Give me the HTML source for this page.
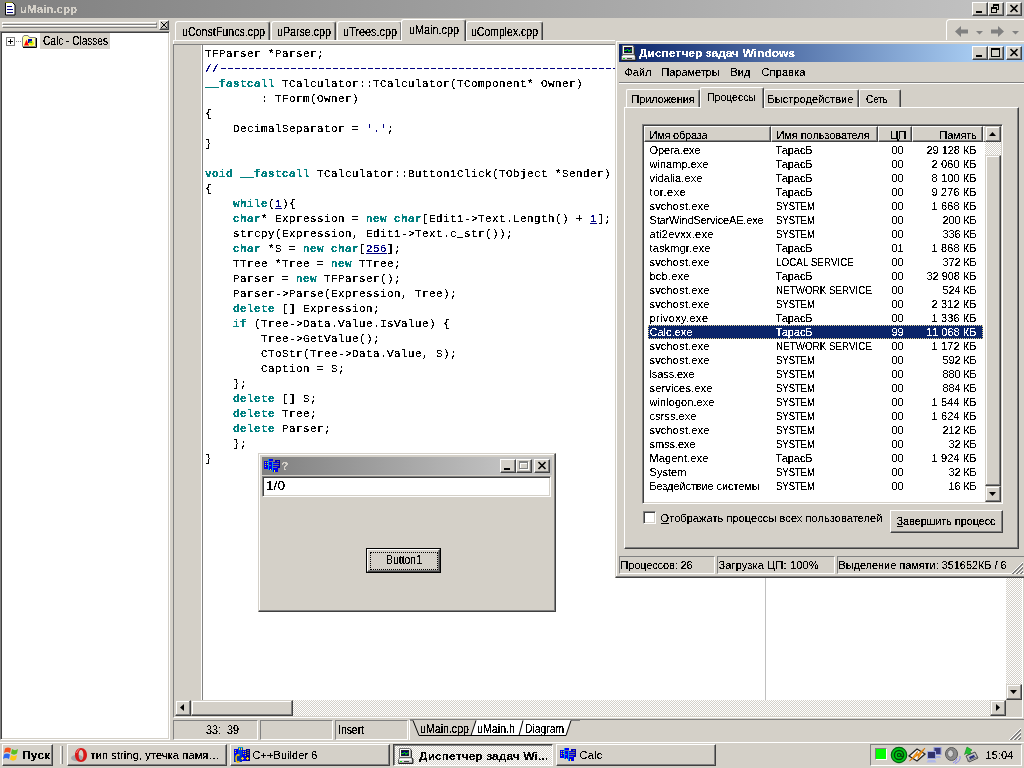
<!DOCTYPE html>
<html><head><meta charset="utf-8"><title>uMain.cpp</title>
<style>
*{box-sizing:border-box;margin:0;padding:0}
html,body{width:1024px;height:768px;overflow:hidden;background:#d4d0c8}
body{position:relative;font-family:"Liberation Sans","DejaVu Sans",sans-serif;font-size:11px;color:#000;line-height:13px}
.a{position:absolute}
.t{position:absolute;white-space:pre;line-height:13px}
.t u{text-decoration:underline}
.t{filter:url(#ths)}
#code{filter:url(#thr)}
.t.m{filter:url(#thm)}
.t.b{filter:url(#ths)}
.btn{background:#d4d0c8;border:1px solid;border-color:#fff #404040 #404040 #fff;box-shadow:inset -1px -1px 0 #808080}
.btn2{background:#d4d0c8;border:1px solid;border-color:#d4d0c8 #404040 #404040 #d4d0c8;box-shadow:inset -1px -1px 0 #808080,inset 1px 1px 0 #fff}
.sunk{border:1px solid;border-color:#808080 #fff #fff #808080}
.sunk2{border:1px solid;border-color:#808080 #fff #fff #808080;box-shadow:inset 1px 1px 0 #404040,inset -1px -1px 0 #d4d0c8}
.chk{background-image:conic-gradient(#fff 25%,#d4d0c8 0 50%,#fff 0 75%,#d4d0c8 0);background-size:2px 2px}
.win{background:#d4d0c8;border:1px solid;border-color:#d4d0c8 #404040 #404040 #d4d0c8;box-shadow:inset -1px -1px 0 #808080,inset 1px 1px 0 #fff}
#code{left:205px;top:47px;font-family:"Liberation Mono","DejaVu Sans Mono",monospace;font-size:11px;line-height:15px;letter-spacing:0.4px;white-space:pre;color:#000}
#code b{color:#008080}
#code i{color:#000080;font-style:normal}
#code u{color:#000080;text-decoration:underline}
#code i.d{position:relative;top:-1px;text-shadow:1px 0 0 #000080,2px 0 0 #000080}
svg{position:absolute;overflow:visible}
</style></head>
<body>
<svg width="0" height="0" style="left:0;top:0"><filter id="thr" x="0" y="0" width="100%" height="100%" color-interpolation-filters="sRGB"><feComponentTransfer><feFuncA type="discrete" tableValues="0 1 1"/></feComponentTransfer></filter><filter id="ths" x="0" y="0" width="100%" height="100%" color-interpolation-filters="sRGB"><feComponentTransfer><feFuncA type="discrete" tableValues="0 0 0 0 0 1 1 1 1 1 1 1"/></feComponentTransfer></filter><filter id="thb" x="0" y="0" width="100%" height="100%" color-interpolation-filters="sRGB"><feComponentTransfer><feFuncA type="discrete" tableValues="0 0 0 0 0 0 1 1 1 1 1"/></feComponentTransfer></filter><filter id="thm" x="0" y="0" width="100%" height="100%" color-interpolation-filters="sRGB"><feComponentTransfer><feFuncA type="discrete" tableValues="0 0 0 1 1 1 1 1"/></feComponentTransfer></filter></svg>
<div class="a" style="left:0px;top:0px;width:1024px;height:18px;background:linear-gradient(90deg,#808080 0,#c0c0c0 972px)"></div>
<svg style="left:5px;top:2px" width="11" height="14" viewBox="0 0 11 14"><path d="M0.5 0.5h7l2.5 2.5v10h-9.5z" fill="#fff" stroke="#000"/><path d="M0 0.5h7" stroke="#808000"/><path d="M2 4.5h5M2 7.5h6M2 10.5h6" stroke="#000080" stroke-width="1"/></svg>
<div class="t b" style="left:19.5px;top:3px;font-weight:bold;color:#d4d0c8;"><span style="display:inline-block;transform:scaleX(1.048);transform-origin:0 0">uMain.cpp</span></div>
<div class="a btn" style="left:972px;top:2px;width:16px;height:14px;"></div>
<div class="a" style="left:976px;top:11px;width:6px;height:2px;background:#000"></div>
<div class="a btn" style="left:988px;top:2px;width:16px;height:14px;"></div>
<div class="a" style="left:993px;top:4px;width:6px;height:6px;border:1px solid #000;border-top-width:2px"></div>
<div class="a" style="left:991px;top:7px;width:6px;height:6px;border:1px solid #000;border-top-width:2px;background:#d4d0c8"></div>
<div class="a btn" style="left:1006px;top:2px;width:16px;height:14px;"></div>
<svg style="left:1010px;top:5px" width="8" height="7" viewBox="0 0 8 7"><path d="M0.5 0L7.5 7M7.5 0L0.5 7" stroke="#000" stroke-width="1.6" fill="none"/></svg>
<div class="a" style="left:2px;top:22px;width:155px;height:3px;border-top:1px solid #fff;border-left:1px solid #fff;border-bottom:1px solid #808080;border-right:1px solid #808080"></div>
<div class="a" style="left:2px;top:25px;width:155px;height:3px;border-top:1px solid #fff;border-left:1px solid #fff;border-bottom:1px solid #808080;border-right:1px solid #808080"></div>
<div class="a" style="left:159px;top:20px;width:10px;height:10px;border:1px solid;border-color:#fff #404040 #404040 #fff;box-shadow:inset -1px -1px 0 #808080"></div>
<svg style="left:161px;top:22px" width="6" height="6" viewBox="0 0 6 6" shape-rendering="crispEdges"><path d="M0 0h1v1h-1zM5 0h1v1h-1zM1 1h1v1h-1zM4 1h1v1h-1zM2 2h1v1h-1zM3 2h1v1h-1zM3 3h1v1h-1zM2 3h1v1h-1zM4 4h1v1h-1zM1 4h1v1h-1zM5 5h1v1h-1zM0 5h1v1h-1z" fill="#000"/></svg>
<div class="a" style="left:0px;top:31px;width:170px;height:709px;background:#fff;border:1px solid;border-color:#808080 #fff #fff #808080;box-shadow:inset 1px 1px 0 #404040,inset -1px -1px 0 #d4d0c8"></div>
<div class="a" style="left:6px;top:37px;width:9px;height:9px;border:1px solid #808080;background:#fff"></div>
<div class="a" style="left:8px;top:41px;width:5px;height:1px;background:#000"></div>
<div class="a" style="left:10px;top:39px;width:1px;height:5px;background:#000"></div>
<div class="a" style="left:16px;top:41px;width:5px;height:1px;background:repeating-linear-gradient(90deg,#808080 0 1px,transparent 1px 2px)"></div>
<svg style="left:22px;top:35px" width="16" height="13" viewBox="0 0 16 13"><path d="M0.500 2.500L2 0.500H6L7.500 2.500H13.500V11.500H0.500z" fill="#ffffa8" stroke="#808080"/><path d="M1 12.500H14.500V3" stroke="#000" fill="none"/><path d="M2 10.500L4.500 4.500L7 10.500z" fill="#ff0000"/><rect x="6" y="4" width="4" height="4" fill="#0000c0"/><circle cx="9.500" cy="8.300" r="2.400" fill="#e8e800"/><path d="M7.500 6.500h2.500v1.500q-1.500-.5-2.500 0z" fill="#00b040"/></svg>
<div class="a" style="left:40px;top:33px;width:70px;height:16px;background:#d4d0c8"></div>
<div class="t m" style="left:42.5px;top:35px;"><span style="display:inline-block;transform:scale(0.917,1.12);transform-origin:0 10px">Calc - Classes</span></div>
<div class="a" style="left:175px;top:21px;width:95px;height:20px;background:#d4d0c8;border-top:1px solid #fff;border-left:1px solid #fff;border-right:1px solid #404040;border-radius:3px 3px 0 0;box-shadow:inset -1px 0 0 #808080"></div>
<div class="t m" style="left:181.5px;top:26px;"><span style="display:inline-block;transform:scale(0.970,1.12);transform-origin:0 10px">uConstFuncs.cpp</span></div>
<div class="a" style="left:271px;top:21px;width:65px;height:20px;background:#d4d0c8;border-top:1px solid #fff;border-left:1px solid #fff;border-right:1px solid #404040;border-radius:3px 3px 0 0;box-shadow:inset -1px 0 0 #808080"></div>
<div class="t m" style="left:276.5px;top:26px;"><span style="display:inline-block;transform:scale(0.970,1.12);transform-origin:0 10px">uParse.cpp</span></div>
<div class="a" style="left:337px;top:21px;width:65px;height:20px;background:#d4d0c8;border-top:1px solid #fff;border-left:1px solid #fff;border-right:1px solid #404040;border-radius:3px 3px 0 0;box-shadow:inset -1px 0 0 #808080"></div>
<div class="t m" style="left:342.5px;top:26px;"><span style="display:inline-block;transform:scale(0.989,1.12);transform-origin:0 10px">uTrees.cpp</span></div>
<div class="a" style="left:466px;top:21px;width:77px;height:20px;background:#d4d0c8;border-top:1px solid #fff;border-left:1px solid #fff;border-right:1px solid #404040;border-radius:3px 3px 0 0;box-shadow:inset -1px 0 0 #808080"></div>
<div class="t m" style="left:470.5px;top:26px;"><span style="display:inline-block;transform:scale(0.953,1.12);transform-origin:0 10px">uComplex.cpp</span></div>
<div class="a" style="left:173px;top:40px;width:851px;height:1px;background:#fff"></div>
<div class="a" style="left:401px;top:19px;width:65px;height:22px;background:#d4d0c8;border-top:1px solid #fff;border-left:1px solid #fff;border-right:1px solid #404040;border-radius:3px 3px 0 0;box-shadow:inset -1px 0 0 #808080"></div>
<div class="t m" style="left:408.5px;top:24px;"><span style="display:inline-block;transform:scale(0.985,1.12);transform-origin:0 10px">uMain.cpp</span></div>
<div class="a" style="left:946px;top:19px;width:80px;height:22px;border-top:1px solid #fff;border-left:1px solid #fff;border-radius:4px 0 0 0"></div>
<svg style="left:955px;top:26px" width="66" height="12" viewBox="0 0 66 12"><g fill="#808080"><path d="M0 5.5L6 0v3.5h7v4H6V11z"/><path d="M21 5h7l-3.500 3.500z"/><path d="M49 5.5L43 0v3.5h-7v4h7V11z"/><path d="M57 5h7l-3.500 3.500z"/></g></svg>
<div class="a" style="left:173px;top:40px;width:1px;height:4px;background:#fff"></div>
<div class="a" style="left:173px;top:44px;width:850px;height:674px;border:1px solid;border-color:#808080 #fff #fff #808080"></div>
<div class="a" style="left:174px;top:45px;width:27px;height:655px;background:#d4d0c8"></div>
<div class="a" style="left:201px;top:45px;width:2px;height:655px;border-left:1px solid #fff;border-right:1px solid #808080"></div>
<div class="a" style="left:203px;top:45px;width:803px;height:655px;background:#fff"></div>
<div class="a" style="left:765px;top:45px;width:1px;height:655px;background:#c0c0c0"></div>
<div id="code" class="a">TFParser *Parser;
<i>//</i><i class="d">---------------------------------------------------------------------------</i>
<b>__fastcall</b> TCalculator::TCalculator(TComponent* Owner)
        : TForm(Owner)
{
    DecimalSeparator = <i>'.'</i>;
}

<b>void __fastcall</b> TCalculator::Button1Click(TObject *Sender)
{
    <b>while</b>(<u>1</u>){
    <b>char</b>* Expression = <b>new char</b>[Edit1-&gt;Text.Length() + <u>1</u>];
    strcpy(Expression, Edit1-&gt;Text.c_str());
    <b>char</b> *S = <b>new char</b>[<u>256</u>];
    TTree *Tree = <b>new</b> TTree;
    Parser = <b>new</b> TFParser();
    Parser-&gt;Parse(Expression, Tree);
    <b>delete</b> [] Expression;
    <b>if</b> (Tree-&gt;Data.Value.IsValue) {
        Tree-&gt;GetValue();
        CToStr(Tree-&gt;Data.Value, S);
        Caption = S;
    };
    <b>delete</b> [] S;
    <b>delete</b> Tree;
    <b>delete</b> Parser;
    };
}</div>
<div class="a chk" style="left:175px;top:700px;width:815px;height:16px;"></div>
<div class="a btn2" style="left:175px;top:700px;width:16px;height:16px;"></div>
<svg style="left:175px;top:700px" width="16" height="16" viewBox="0 0 16 16"><path d="M9 4v7l-4-3.500z" fill="#000"/></svg>
<div class="a btn2" style="left:191px;top:700px;width:102px;height:16px;"></div>
<div class="a btn2" style="left:990px;top:700px;width:16px;height:16px;"></div>
<svg style="left:990px;top:700px" width="16" height="16" viewBox="0 0 16 16"><path d="M6 4v7l4-3.500z" fill="#000"/></svg>
<div class="a chk" style="left:1006px;top:45px;width:16px;height:639px;"></div>
<div class="a btn2" style="left:1006px;top:684px;width:16px;height:16px;"></div>
<svg style="left:1006px;top:684px" width="16" height="16" viewBox="0 0 16 16"><path d="M4 6h7l-3.500 4z" fill="#000"/></svg>
<div class="a" style="left:1006px;top:700px;width:16px;height:16px;background:#d4d0c8"></div>
<div class="a sunk" style="left:173px;top:720px;width:85px;height:20px;"></div>
<div class="a sunk" style="left:260px;top:720px;width:73px;height:20px;"></div>
<div class="a sunk" style="left:335px;top:720px;width:73px;height:20px;"></div>
<div class="t m" style="left:205.5px;top:724px;"><span style="display:inline-block;transform:scale(0.981,1.12);transform-origin:0 10px">33:  39</span></div>
<div class="t m" style="left:337.5px;top:724px;"><span style="display:inline-block;transform:scale(0.945,1.12);transform-origin:0 10px">Insert</span></div>
<div class="a" style="left:409px;top:719px;width:615px;height:22px;border-left:1px solid #fff;border-top:1px solid #808080"></div>
<svg style="left:410px;top:720px" width="170" height="18" viewBox="0 0 170 18"><path d="M0 0.500H170" stroke="#808080"/><path d="M66 0L61 15H109L113 0z" fill="#fff"/><path d="M113 0L109 15H156L161 0z" fill="#fff"/><path d="M3 0L9 15H61L66 0z" fill="#d4d0c8"/><path d="M3 0.500L9 15.500H61L66 0.500M61 15.500H109L113 0.500M109 15.500H156L161 0.500" stroke="#000" fill="none"/></svg>
<div class="t m" style="left:419.5px;top:723px;"><span style="display:inline-block;transform:scale(0.965,1.12);transform-origin:0 10px">uMain.cpp</span></div>
<div class="t m" style="left:476.5px;top:723px;"><span style="display:inline-block;transform:scale(0.971,1.12);transform-origin:0 10px">uMain.h</span></div>
<div class="t m" style="left:524.5px;top:723px;"><span style="display:inline-block;transform:scale(0.938,1.12);transform-origin:0 10px">Diagram</span></div>
<svg style="left:1008px;top:727px" width="14" height="14" viewBox="0 0 14 14"><path d="M13 1L1 13M13 5L5 13M13 9L9 13" stroke="#fff"/><path d="M13 2L2 13M13 3L3 13M13 6L6 13M13 7L7 13M13 10L10 13M13 11L11 13" stroke="#808080"/></svg>
<div class="a" style="left:0px;top:742px;width:1024px;height:26px;background:#d4d0c8;border-top:1px solid #fff"></div>
<div class="a" style="left:0px;top:740px;width:1024px;height:1px;background:#d4d0c8"></div>
<div class="a btn" style="left:2px;top:744px;width:51px;height:22px;"></div>
<svg style="left:4px;top:746px" width="16" height="15" viewBox="0 0 16 15"><path d="M1 2.5c2-1.5 4-1.5 6 0l-1 4.500c-2-1.500-4-1.500-6 0z" fill="#f4501c"/><path d="M8 3c2 1.500 4 1.500 6 0l-1 4.500c-2 1.500-4 1.500-6 0z" fill="#58c020"/><path d="M0 8.500c2-1.500 4-1.500 6 0l-1 4.500c-2-1.500-4-1.500-6 0z" fill="#2c68f0"/><path d="M7 9c2 1.500 4 1.500 6 0l-1 4.500c-2 1.500-4 1.500-6 0z" fill="#ffc810"/></svg>
<div class="t b" style="left:21.5px;top:749px;font-weight:bold;"><span style="display:inline-block;transform:scaleX(1.103);transform-origin:0 0">Пуск</span></div>
<div class="a" style="left:60px;top:746px;width:3px;height:18px;border-left:1px solid #fff;border-right:1px solid #808080"></div>
<div class="a btn" style="left:67px;top:744px;width:160px;height:22px;"></div>
<div class="t" style="left:90.5px;top:749px;letter-spacing:0.13px;">тип string, утечка памя…</div>
<div class="a btn" style="left:230px;top:744px;width:160px;height:22px;"></div>
<div class="t" style="left:252.5px;top:749px;letter-spacing:0.07px;">C++Builder 6</div>
<div class="a chk" style="left:393px;top:744px;width:160px;height:22px;border:1px solid;border-color:#404040 #fff #fff #404040;box-shadow:inset 1px 1px 0 #808080"></div>
<div class="t b" style="left:418.5px;top:750px;font-weight:bold;"><span style="display:inline-block;transform:scaleX(1.101);transform-origin:0 0">Диспетчер задач Wi...</span></div>
<div class="a btn" style="left:556px;top:744px;width:160px;height:22px;"></div>
<div class="t" style="left:579.5px;top:749px;letter-spacing:0.25px;">Calc</div>
<svg style="left:71px;top:748px" width="17" height="15" viewBox="0 0 17 15"><ellipse cx="6" cy="10" rx="6" ry="3.200" fill="#a4a6aa"/><path fill-rule="evenodd" fill="#d81818" d="M10 0C13.500 0 16 3 16 7S13.500 14 10 14S4 11 4 7S6.500 0 10 0zM10 1.800C8.600 1.800 7.600 4 7.600 7S8.600 12.200 10 12.200S12.400 10 12.400 7S11.400 1.800 10 1.800z"/><path d="M5.500 5q1-3 3-4" stroke="#ff9090" fill="none"/></svg>
<svg style="left:234px;top:747px" width="16" height="16" viewBox="0 0 16 16"><rect x="0" y="2" width="5" height="11" fill="#0000f0"/><rect x="4" y="0" width="5" height="8" fill="#0040e0"/><rect x="4" y="0" width="5" height="1" fill="#00a0c0"/><rect x="8" y="3" width="5" height="11" fill="#0000f0"/><rect x="12" y="2" width="4" height="12" fill="#000090"/><rect x="0" y="8" width="8" height="7" fill="#0030c0"/><path d="M1 3.500h1M1 5.500h1M9 4.500h1M11 4.500h1M9 6.500h1M11 6.500h1M11 8.500h1M13.500 3.500h1M13.500 5.500h1M13.500 7.500h1" stroke="#ffe000"/><path d="M5.500 1v2M7.500 1v2" stroke="#ffe000"/><path d="M5.500 8.500Q2 6.500 2 11.500T5.500 14.500" stroke="#f0c000" stroke-width="1.600" fill="none"/><path d="M7 11.500h3M8.500 10v3M12 11.500h3M13.500 10v3" stroke="#ffd000" stroke-width="1.200"/></svg>
<svg style="left:398px;top:748px" width="16" height="16" viewBox="0 0 16 16"><path d="M1.500 0.500h10l1.500 1v8h-11.500z" fill="#dcdcdc" stroke="#707070"/><path d="M2 1.500h9.500M2.500 1.500v7" stroke="#fff"/><path d="M12.500 1.500l1 1v7.500" stroke="#303030" fill="none"/><rect x="3.500" y="2.500" width="7" height="5" fill="#000070" stroke="#202020"/><path d="M3.500 5.500h2l1-1.500 1.500 2.500 1-1.500h1.500" stroke="#00f000" fill="none"/><path d="M0.500 11.500l1.500-2h11l1.500 1.500v4h-14z" fill="#d8d8d8" stroke="#606060"/><path d="M1 11.500h12" stroke="#fff"/><path d="M0.500 15.500h14.500v-4.500l-1-1" stroke="#202020" fill="none"/><rect x="2" y="13" width="2" height="1" fill="#00e000"/><path d="M6 13.500h5" stroke="#404040"/></svg>
<svg style="left:560px;top:748px" width="16" height="14" viewBox="0 0 16 14"><rect x="11" y="1" width="5" height="8" fill="#0000a8"/><rect x="0" y="2" width="5" height="8" fill="#0000f0"/><rect x="4" y="0" width="5" height="11" fill="#0000f8"/><rect x="4" y="0" width="1" height="11" fill="#00a0f0"/><rect x="8" y="3" width="6" height="10" fill="#0000f0"/><rect x="8" y="3" width="1" height="10" fill="#00a0f0"/><path d="M1 3.500h1M3 3.500h1M1 5.500h1M3 5.500h1M1 7.500h1M5.500 2.500h1M7.500 2.500h1M5.500 6.500h1M9.500 4.500h1M11.500 4.500h1M9.500 6.500h1M11.500 6.500h1M9.500 8.500h1M11.500 8.500h1M13.500 2.500h1M13.500 4.500h1M13.500 6.500h1" stroke="#e8d820"/><path d="M6.500 10v1M10.500 11v2" stroke="#ffff00"/></svg>
<div class="a sunk" style="left:870px;top:744px;width:152px;height:22px;"></div>
<div class="a" style="left:875px;top:748px;width:12px;height:12px;background:#00ff00;border:1px solid;border-color:#808080 #fff #fff #808080"></div>
<svg style="left:890px;top:746px" width="90" height="18" viewBox="0 0 90 18"><circle cx="9" cy="9" r="7.700" fill="#00c818" stroke="#006010" stroke-width="1.200"/><circle cx="9" cy="9" r="4.600" fill="none" stroke="#004808" stroke-width="1.500"/><circle cx="9" cy="9" r="1.600" fill="none" stroke="#004808" stroke-width="1.300"/><path d="M11 7.500v2.500q1 1.500 2.500 0" stroke="#004808" stroke-width="1.300" fill="none"/><path d="M19 10L27 3L35 8L27 15z" fill="#f4f4f4" stroke="#202020" stroke-width="1.300"/><path d="M19.500 15L27.500 5.500L26.500 9.500L35 2L28 12.500L28.500 8.500z" fill="#ffa010" stroke="#d07000" stroke-width="0.800"/><rect x="44" y="1.500" width="7" height="7" fill="#383878" stroke="#9098d8"/><path d="M45 10h5l1 2h-7z" fill="#a8b0e0"/><rect x="37.500" y="5.500" width="8" height="7" fill="#303068" stroke="#a0a8e0"/><path d="M38 14h7l1.500 2.500h-10z" fill="#b0b8e8"/><ellipse cx="61.500" cy="8" rx="6" ry="6.500" fill="#8c8c8c" stroke="#585858"/><ellipse cx="60.500" cy="7.500" rx="3" ry="3.800" fill="#d0d0d0" stroke="#686868"/><path d="M67 12q0 3-4 5M70 10q1 5-5 7.500" stroke="#8888f0" fill="none"/><path d="M77 1l5 3-2 1.500 2 3-3 1.500-2-3-2.500 1.500z" fill="#20c030" stroke="#108018" stroke-width="0.600"/><path d="M76 10l9-4 3 6-9 4z" fill="#c8c8c8" stroke="#484848"/><path d="M79 11l5-2.200 1 2.200-5 2.200z" fill="#283080"/><path d="M77 15l10-4" stroke="#707070"/></svg>
<div class="t" style="left:985.5px;top:749px;letter-spacing:0.09px;">15:04</div>
<div class="a win" style="left:258px;top:453px;width:298px;height:159px;"></div>
<div class="a" style="left:262px;top:457px;width:290px;height:18px;background:linear-gradient(90deg,#808080 0,#c0c0c0 238px)"></div>
<svg style="left:264px;top:459px" width="16" height="14" viewBox="0 0 16 14"><rect x="11" y="1" width="5" height="8" fill="#0000a8"/><rect x="0" y="2" width="5" height="8" fill="#0000f0"/><rect x="4" y="0" width="5" height="11" fill="#0000f8"/><rect x="4" y="0" width="1" height="11" fill="#00a0f0"/><rect x="8" y="3" width="6" height="10" fill="#0000f0"/><rect x="8" y="3" width="1" height="10" fill="#00a0f0"/><path d="M1 3.500h1M3 3.500h1M1 5.500h1M3 5.500h1M1 7.500h1M5.500 2.500h1M7.500 2.500h1M5.500 6.500h1M9.500 4.500h1M11.500 4.500h1M9.500 6.500h1M11.500 6.500h1M9.500 8.500h1M11.500 8.500h1M13.500 2.500h1M13.500 4.500h1M13.500 6.500h1" stroke="#e8d820"/><path d="M6.500 10v1M10.500 11v2" stroke="#ffff00"/></svg>
<div class="t b" style="left:281.5px;top:460px;font-weight:bold;color:#d4d0c8;">?</div>
<div class="a btn" style="left:500px;top:459px;width:16px;height:14px;"></div>
<div class="a" style="left:504px;top:468px;width:6px;height:2px;background:#000"></div>
<div class="a btn" style="left:516px;top:459px;width:16px;height:14px;"></div>
<div class="a" style="left:520px;top:462px;width:9px;height:8px;border:1px solid #fff;border-top-width:2px"></div>
<div class="a" style="left:519px;top:461px;width:9px;height:8px;border:1px solid #808080;border-top-width:2px"></div>
<div class="a btn" style="left:534px;top:459px;width:16px;height:14px;"></div>
<svg style="left:538px;top:462px" width="8" height="7" viewBox="0 0 8 7"><path d="M0.5 0L7.5 7M7.5 0L0.5 7" stroke="#000" stroke-width="1.6" fill="none"/></svg>
<div class="a sunk2" style="left:262px;top:476px;width:289px;height:21px;background:#fff"></div>
<div class="t m" style="left:265.5px;top:480px;"><span style="display:inline-block;transform:scale(1.242,1.12);transform-origin:0 10px">1/0</span></div>
<div class="a" style="left:366px;top:548px;width:75px;height:25px;border:1px solid #000"></div>
<div class="a btn" style="left:367px;top:549px;width:73px;height:23px;"></div>
<div class="a" style="left:370px;top:552px;width:68px;height:18px;border:1px dotted #000"></div>
<div class="t m" style="left:385.5px;top:554px;"><span style="display:inline-block;transform:scale(0.949,1.12);transform-origin:0 10px">Button1</span></div>
<div class="a win" style="left:615px;top:40px;width:413px;height:538px;"></div>
<div class="a" style="left:619px;top:44px;width:405px;height:18px;background:linear-gradient(90deg,#0a246a 0,#a6caf0 353px)"></div>
<svg style="left:621px;top:45px" width="16" height="16" viewBox="0 0 16 16"><path d="M1.500 0.500h10l1.500 1v8h-11.500z" fill="#dcdcdc" stroke="#707070"/><path d="M2 1.500h9.500M2.500 1.500v7" stroke="#fff"/><path d="M12.500 1.500l1 1v7.500" stroke="#303030" fill="none"/><rect x="3.500" y="2.500" width="7" height="5" fill="#000070" stroke="#202020"/><path d="M3.500 5.500h2l1-1.500 1.500 2.500 1-1.500h1.500" stroke="#00f000" fill="none"/><path d="M0.500 11.500l1.500-2h11l1.500 1.500v4h-14z" fill="#d8d8d8" stroke="#606060"/><path d="M1 11.500h12" stroke="#fff"/><path d="M0.500 15.500h14.500v-4.500l-1-1" stroke="#202020" fill="none"/><rect x="2" y="13" width="2" height="1" fill="#00e000"/><path d="M6 13.500h5" stroke="#404040"/></svg>
<div class="t b" style="left:638.5px;top:47px;font-weight:bold;color:#fff;"><span style="display:inline-block;transform:scaleX(1.092);transform-origin:0 0">Диспетчер задач Windows</span></div>
<div class="a btn" style="left:972px;top:46px;width:16px;height:14px;"></div>
<div class="a" style="left:976px;top:55px;width:6px;height:2px;background:#000"></div>
<div class="a btn" style="left:988px;top:46px;width:16px;height:14px;"></div>
<div class="a" style="left:991px;top:48px;width:9px;height:9px;border:1px solid #000;border-top-width:2px"></div>
<div class="a btn" style="left:1006px;top:46px;width:16px;height:14px;"></div>
<svg style="left:1010px;top:49px" width="8" height="7" viewBox="0 0 8 7"><path d="M0.5 0L7.5 7M7.5 0L0.5 7" stroke="#000" stroke-width="1.6" fill="none"/></svg>
<div class="t" style="left:624.5px;top:66px;letter-spacing:-0.01px;">Файл</div>
<div class="t" style="left:661.5px;top:66px;letter-spacing:-0.07px;">Параметры</div>
<div class="t" style="left:730.5px;top:66px;letter-spacing:0.03px;">Вид</div>
<div class="t" style="left:761.5px;top:66px;letter-spacing:0.12px;">Справка</div>
<div class="a" style="left:619px;top:82px;width:405px;height:2px;border-top:1px solid #808080;border-bottom:1px solid #fff"></div>
<div class="a" style="left:624px;top:107px;width:395px;height:442px;border:1px solid;border-color:#fff #404040 #404040 #fff;box-shadow:inset -1px -1px 0 #808080"></div>
<div class="a" style="left:626px;top:89px;width:74px;height:18px;background:#d4d0c8;border-top:1px solid #fff;border-left:1px solid #fff;border-right:1px solid #404040;border-radius:2px 2px 0 0;box-shadow:inset -1px 0 0 #808080"></div>
<div class="t" style="left:631.5px;top:93px;letter-spacing:-0.14px;">Приложения</div>
<div class="a" style="left:764px;top:89px;width:95px;height:18px;background:#d4d0c8;border-top:1px solid #fff;border-left:1px solid #fff;border-right:1px solid #404040;border-radius:2px 2px 0 0;box-shadow:inset -1px 0 0 #808080"></div>
<div class="t" style="left:767.5px;top:93px;letter-spacing:0.07px;">Быстродействие</div>
<div class="a" style="left:859px;top:89px;width:42px;height:18px;background:#d4d0c8;border-top:1px solid #fff;border-left:1px solid #fff;border-right:1px solid #404040;border-radius:2px 2px 0 0;box-shadow:inset -1px 0 0 #808080"></div>
<div class="t" style="left:865.5px;top:93px;"><span style="display:inline-block;transform:scaleX(0.899);transform-origin:0 0">Сеть</span></div>
<div class="a" style="left:700px;top:87px;width:64px;height:21px;background:#d4d0c8;border-top:1px solid #fff;border-left:1px solid #fff;border-right:1px solid #404040;border-radius:2px 2px 0 0;box-shadow:inset -1px 0 0 #808080"></div>
<div class="t" style="left:706.5px;top:91px;"><span style="display:inline-block;transform:scaleX(0.954);transform-origin:0 0">Процессы</span></div>
<div class="a sunk2" style="left:642px;top:124px;width:361px;height:380px;background:#fff"></div>
<div class="a btn" style="left:644px;top:126px;width:127px;height:16px;"></div>
<div class="t" style="left:649.5px;top:129px;letter-spacing:-0.22px;">Имя образа</div>
<div class="a btn" style="left:771px;top:126px;width:107px;height:16px;"></div>
<div class="t" style="left:776.5px;top:129px;letter-spacing:-0.07px;">Имя пользователя</div>
<div class="a btn" style="left:878px;top:126px;width:34px;height:16px;"></div>
<div class="t" style="left:890.5px;top:129px;letter-spacing:-0.02px;">ЦП</div>
<div class="a btn" style="left:912px;top:126px;width:71px;height:16px;"></div>
<div class="t" style="left:939.5px;top:129px;letter-spacing:-0.22px;">Память</div>
<div class="a" style="left:983px;top:126px;width:2px;height:16px;background:#d4d0c8;border-left:1px solid #fff;border-top:1px solid #fff;border-bottom:1px solid #404040"></div>
<div class="a chk" style="left:985px;top:126px;width:16px;height:376px;"></div>
<div class="a btn2" style="left:985px;top:126px;width:16px;height:16px;"></div>
<svg style="left:985px;top:126px" width="16" height="16" viewBox="0 0 16 16"><path d="M4 10h7l-3.500-4z" fill="#000"/></svg>
<div class="a btn2" style="left:985px;top:486px;width:16px;height:16px;"></div>
<svg style="left:985px;top:486px" width="16" height="16" viewBox="0 0 16 16"><path d="M4 6h7l-3.500 4z" fill="#000"/></svg>
<div class="a btn2" style="left:985px;top:155px;width:16px;height:331px;"></div>
<div class="t" style="left:649.5px;top:144px;letter-spacing:-0.04px;">Opera.exe</div>
<div class="t" style="left:775.5px;top:144px;letter-spacing:-0.05px;">ТарасБ</div>
<div class="t" style="left:891.5px;top:144px;letter-spacing:-0.12px;">00</div>
<div class="t" style="left:926.5px;top:144px;letter-spacing:-0.04px;">29 128 КБ</div>
<div class="t" style="left:649.5px;top:158px;letter-spacing:0.03px;">winamp.exe</div>
<div class="t" style="left:775.5px;top:158px;letter-spacing:-0.05px;">ТарасБ</div>
<div class="t" style="left:891.5px;top:158px;letter-spacing:-0.12px;">00</div>
<div class="t" style="left:931.6px;top:158px;letter-spacing:0.10px;">2 060 КБ</div>
<div class="t" style="left:649.5px;top:172px;letter-spacing:0.09px;">vidalia.exe</div>
<div class="t" style="left:775.5px;top:172px;letter-spacing:-0.05px;">ТарасБ</div>
<div class="t" style="left:891.5px;top:172px;letter-spacing:-0.12px;">00</div>
<div class="t" style="left:931.6px;top:172px;letter-spacing:0.10px;">8 100 КБ</div>
<div class="t" style="left:649.5px;top:186px;letter-spacing:0.57px;">tor.exe</div>
<div class="t" style="left:775.5px;top:186px;letter-spacing:-0.05px;">ТарасБ</div>
<div class="t" style="left:891.5px;top:186px;letter-spacing:-0.12px;">00</div>
<div class="t" style="left:931.6px;top:186px;letter-spacing:0.10px;">9 276 КБ</div>
<div class="t" style="left:649.5px;top:200px;letter-spacing:0.17px;">svchost.exe</div>
<div class="t" style="left:775.5px;top:200px;"><span style="display:inline-block;transform:scaleX(0.862);transform-origin:0 0">SYSTEM</span></div>
<div class="t" style="left:891.5px;top:200px;letter-spacing:-0.12px;">00</div>
<div class="t" style="left:931.6px;top:200px;letter-spacing:0.10px;">1 668 КБ</div>
<div class="t" style="left:649.5px;top:214px;letter-spacing:-0.16px;">StarWindServiceAE.exe</div>
<div class="t" style="left:775.5px;top:214px;"><span style="display:inline-block;transform:scaleX(0.862);transform-origin:0 0">SYSTEM</span></div>
<div class="t" style="left:891.5px;top:214px;letter-spacing:-0.12px;">00</div>
<div class="t" style="left:942.5px;top:214px;letter-spacing:-0.17px;">200 КБ</div>
<div class="t" style="left:649.5px;top:228px;letter-spacing:0.24px;">ati2evxx.exe</div>
<div class="t" style="left:775.5px;top:228px;"><span style="display:inline-block;transform:scaleX(0.862);transform-origin:0 0">SYSTEM</span></div>
<div class="t" style="left:891.5px;top:228px;letter-spacing:-0.12px;">00</div>
<div class="t" style="left:942.5px;top:228px;letter-spacing:-0.17px;">336 КБ</div>
<div class="t" style="left:649.5px;top:242px;letter-spacing:0.15px;">taskmgr.exe</div>
<div class="t" style="left:775.5px;top:242px;letter-spacing:-0.05px;">ТарасБ</div>
<div class="t" style="left:891.5px;top:242px;letter-spacing:-0.12px;">01</div>
<div class="t" style="left:931.6px;top:242px;letter-spacing:0.10px;">1 868 КБ</div>
<div class="t" style="left:649.5px;top:256px;letter-spacing:0.17px;">svchost.exe</div>
<div class="t" style="left:775.5px;top:256px;"><span style="display:inline-block;transform:scaleX(0.898);transform-origin:0 0">LOCAL SERVICE</span></div>
<div class="t" style="left:891.5px;top:256px;letter-spacing:-0.12px;">00</div>
<div class="t" style="left:942.5px;top:256px;letter-spacing:-0.17px;">372 КБ</div>
<div class="t" style="left:649.5px;top:270px;letter-spacing:0.21px;">bcb.exe</div>
<div class="t" style="left:775.5px;top:270px;letter-spacing:-0.05px;">ТарасБ</div>
<div class="t" style="left:891.5px;top:270px;letter-spacing:-0.12px;">00</div>
<div class="t" style="left:926.5px;top:270px;letter-spacing:-0.04px;">32 908 КБ</div>
<div class="t" style="left:649.5px;top:284px;letter-spacing:0.17px;">svchost.exe</div>
<div class="t" style="left:775.5px;top:284px;"><span style="display:inline-block;transform:scaleX(0.894);transform-origin:0 0">NETWORK SERVICE</span></div>
<div class="t" style="left:891.5px;top:284px;letter-spacing:-0.12px;">00</div>
<div class="t" style="left:942.5px;top:284px;letter-spacing:-0.17px;">524 КБ</div>
<div class="t" style="left:649.5px;top:298px;letter-spacing:0.17px;">svchost.exe</div>
<div class="t" style="left:775.5px;top:298px;"><span style="display:inline-block;transform:scaleX(0.862);transform-origin:0 0">SYSTEM</span></div>
<div class="t" style="left:891.5px;top:298px;letter-spacing:-0.12px;">00</div>
<div class="t" style="left:931.6px;top:298px;letter-spacing:0.10px;">2 312 КБ</div>
<div class="t" style="left:649.5px;top:312px;letter-spacing:0.38px;">privoxy.exe</div>
<div class="t" style="left:775.5px;top:312px;letter-spacing:-0.05px;">ТарасБ</div>
<div class="t" style="left:891.5px;top:312px;letter-spacing:-0.12px;">00</div>
<div class="t" style="left:931.6px;top:312px;letter-spacing:0.10px;">1 336 КБ</div>
<div class="a" style="left:648px;top:325px;width:335px;height:14px;background:#0a246a;outline:1px dotted #e8d890;outline-offset:-1px"></div>
<div class="t" style="left:649.5px;top:326px;color:#fff;letter-spacing:0.03px;">Calc.exe</div>
<div class="t" style="left:775.5px;top:326px;color:#fff;letter-spacing:-0.05px;">ТарасБ</div>
<div class="t" style="left:891.5px;top:326px;color:#fff;letter-spacing:-0.12px;">99</div>
<div class="t" style="left:926.6px;top:326px;color:#fff;letter-spacing:0.05px;">11 068 КБ</div>
<div class="t" style="left:649.5px;top:340px;letter-spacing:0.17px;">svchost.exe</div>
<div class="t" style="left:775.5px;top:340px;"><span style="display:inline-block;transform:scaleX(0.894);transform-origin:0 0">NETWORK SERVICE</span></div>
<div class="t" style="left:891.5px;top:340px;letter-spacing:-0.12px;">00</div>
<div class="t" style="left:931.6px;top:340px;letter-spacing:0.10px;">1 172 КБ</div>
<div class="t" style="left:649.5px;top:354px;letter-spacing:0.17px;">svchost.exe</div>
<div class="t" style="left:775.5px;top:354px;"><span style="display:inline-block;transform:scaleX(0.862);transform-origin:0 0">SYSTEM</span></div>
<div class="t" style="left:891.5px;top:354px;letter-spacing:-0.12px;">00</div>
<div class="t" style="left:942.5px;top:354px;letter-spacing:-0.17px;">592 КБ</div>
<div class="t" style="left:649.5px;top:368px;letter-spacing:-0.10px;">lsass.exe</div>
<div class="t" style="left:775.5px;top:368px;"><span style="display:inline-block;transform:scaleX(0.862);transform-origin:0 0">SYSTEM</span></div>
<div class="t" style="left:891.5px;top:368px;letter-spacing:-0.12px;">00</div>
<div class="t" style="left:942.5px;top:368px;letter-spacing:-0.17px;">880 КБ</div>
<div class="t" style="left:649.5px;top:382px;letter-spacing:0.15px;">services.exe</div>
<div class="t" style="left:775.5px;top:382px;"><span style="display:inline-block;transform:scaleX(0.862);transform-origin:0 0">SYSTEM</span></div>
<div class="t" style="left:891.5px;top:382px;letter-spacing:-0.12px;">00</div>
<div class="t" style="left:942.5px;top:382px;letter-spacing:-0.17px;">884 КБ</div>
<div class="t" style="left:649.5px;top:396px;letter-spacing:0.07px;">winlogon.exe</div>
<div class="t" style="left:775.5px;top:396px;"><span style="display:inline-block;transform:scaleX(0.862);transform-origin:0 0">SYSTEM</span></div>
<div class="t" style="left:891.5px;top:396px;letter-spacing:-0.12px;">00</div>
<div class="t" style="left:931.6px;top:396px;letter-spacing:0.10px;">1 544 КБ</div>
<div class="t" style="left:649.5px;top:410px;letter-spacing:0.06px;">csrss.exe</div>
<div class="t" style="left:775.5px;top:410px;"><span style="display:inline-block;transform:scaleX(0.862);transform-origin:0 0">SYSTEM</span></div>
<div class="t" style="left:891.5px;top:410px;letter-spacing:-0.12px;">00</div>
<div class="t" style="left:931.6px;top:410px;letter-spacing:0.10px;">1 624 КБ</div>
<div class="t" style="left:649.5px;top:424px;letter-spacing:0.17px;">svchost.exe</div>
<div class="t" style="left:775.5px;top:424px;"><span style="display:inline-block;transform:scaleX(0.862);transform-origin:0 0">SYSTEM</span></div>
<div class="t" style="left:891.5px;top:424px;letter-spacing:-0.12px;">00</div>
<div class="t" style="left:942.5px;top:424px;letter-spacing:-0.17px;">212 КБ</div>
<div class="t" style="left:649.5px;top:438px;letter-spacing:-0.06px;">smss.exe</div>
<div class="t" style="left:775.5px;top:438px;"><span style="display:inline-block;transform:scaleX(0.862);transform-origin:0 0">SYSTEM</span></div>
<div class="t" style="left:891.5px;top:438px;letter-spacing:-0.12px;">00</div>
<div class="t" style="left:948.5px;top:438px;letter-spacing:-0.18px;">32 КБ</div>
<div class="t" style="left:649.5px;top:452px;letter-spacing:0.15px;">Magent.exe</div>
<div class="t" style="left:775.5px;top:452px;letter-spacing:-0.05px;">ТарасБ</div>
<div class="t" style="left:891.5px;top:452px;letter-spacing:-0.12px;">00</div>
<div class="t" style="left:931.6px;top:452px;letter-spacing:0.10px;">1 924 КБ</div>
<div class="t" style="left:649.5px;top:466px;letter-spacing:0.05px;">System</div>
<div class="t" style="left:775.5px;top:466px;"><span style="display:inline-block;transform:scaleX(0.862);transform-origin:0 0">SYSTEM</span></div>
<div class="t" style="left:891.5px;top:466px;letter-spacing:-0.12px;">00</div>
<div class="t" style="left:948.5px;top:466px;letter-spacing:-0.18px;">32 КБ</div>
<div class="t" style="left:649.5px;top:480px;letter-spacing:-0.10px;">Бездействие системы</div>
<div class="t" style="left:775.5px;top:480px;"><span style="display:inline-block;transform:scaleX(0.862);transform-origin:0 0">SYSTEM</span></div>
<div class="t" style="left:891.5px;top:480px;letter-spacing:-0.12px;">00</div>
<div class="t" style="left:948.5px;top:480px;letter-spacing:-0.18px;">16 КБ</div>
<div class="a sunk2" style="left:643px;top:511px;width:13px;height:13px;background:#fff"></div>
<div class="t" style="left:660.5px;top:512px;letter-spacing:0.07px;"><u>О</u>тображать процессы всех пользователей</div>
<div class="a btn" style="left:890px;top:510px;width:113px;height:23px;"></div>
<div class="t" style="left:896.5px;top:515px;letter-spacing:-0.12px;"><u>З</u>авершить процесс</div>
<div class="a sunk" style="left:619px;top:556px;width:96px;height:18px;"></div>
<div class="a sunk" style="left:717px;top:556px;width:118px;height:18px;"></div>
<div class="a sunk" style="left:837px;top:556px;width:190px;height:18px;"></div>
<div class="t" style="left:620.5px;top:559px;letter-spacing:-0.14px;">Процессов: 26</div>
<div class="t" style="left:718.5px;top:559px;letter-spacing:0.13px;">Загрузка ЦП: 100%</div>
<div class="t" style="left:838.5px;top:559px;letter-spacing:-0.06px;">Выделение памяти: 351652КБ / 6</div>
<svg style="left:1010px;top:561px" width="14" height="14" viewBox="0 0 14 14"><path d="M13 1L1 13M13 5L5 13M13 9L9 13" stroke="#fff"/><path d="M13 2L2 13M13 3L3 13M13 6L6 13M13 7L7 13M13 10L10 13M13 11L11 13" stroke="#808080"/></svg>
</body></html>
